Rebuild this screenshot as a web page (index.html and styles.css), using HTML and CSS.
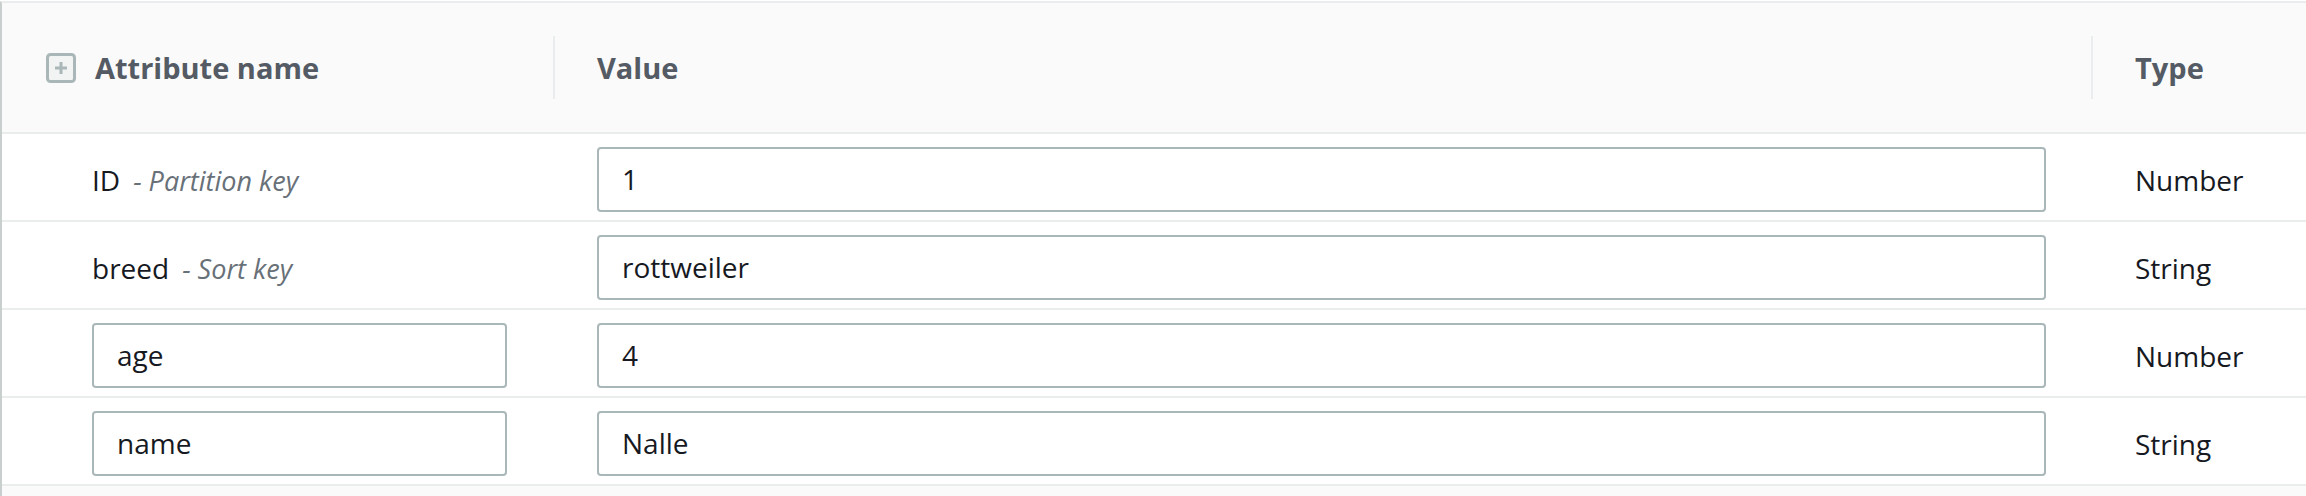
FILE: index.html
```html
<!DOCTYPE html>
<html lang="en">
<head>
<meta charset="utf-8">
<title>Attributes</title>
<link rel="stylesheet" href="styles.css">
</head>
<body>
<div class="table">
  <div class="row head">
    <div class="cell c1">
      <span class="expand" aria-hidden="true">
        <svg width="30" height="30" viewBox="0 0 30 30">
          <rect x="1.5" y="1.5" width="27" height="27" rx="3" fill="#f2f3f3" stroke="#aab7b8" stroke-width="3"/>
          <rect x="13.5" y="9" width="3" height="12" fill="#aab7b8"/>
          <rect x="9" y="13.5" width="12" height="3" fill="#aab7b8"/>
        </svg>
      </span>
      <span class="th">Attribute name</span>
    </div>
    <div class="cell c2 divided"><span class="th">Value</span></div>
    <div class="cell c3 divided"><span class="th">Type</span></div>
  </div>

  <div class="row">
    <div class="cell c1 named"><span class="name">ID</span><span class="key">- Partition key</span></div>
    <div class="cell c2"><input class="field" type="text" value="1"></div>
    <div class="cell c3"><span class="type">Number</span></div>
  </div>

  <div class="row">
    <div class="cell c1 named"><span class="name">breed</span><span class="key">- Sort key</span></div>
    <div class="cell c2"><input class="field" type="text" value="rottweiler"></div>
    <div class="cell c3"><span class="type">String</span></div>
  </div>

  <div class="row">
    <div class="cell c1 named"><input class="field attr" type="text" value="age"></div>
    <div class="cell c2"><input class="field" type="text" value="4"></div>
    <div class="cell c3"><span class="type">Number</span></div>
  </div>

  <div class="row">
    <div class="cell c1 named"><input class="field attr" type="text" value="name"></div>
    <div class="cell c2"><input class="field" type="text" value="Nalle"></div>
    <div class="cell c3"><span class="type">String</span></div>
  </div>
  <div class="foot"></div>
</div>
</body>
</html>
```

FILE: styles.css
```css
html, body {
  margin: 0;
  padding: 0;
  background: #ffffff;
}

body {
  font-family: "Open Sans", "Noto Sans", Arial, sans-serif;
  color: #16191f;
  padding-top: 1px;
}

.table {
  border-left: 2px solid #c9cfcf;
  border-top: 2px solid #eaeded;
  display: flex;
  flex-direction: column;
  height: 495px;
  box-sizing: border-box;
}

.row {
  display: grid;
  grid-template-columns: 551px 1538px 1fr;
  height: 88px;
  border-bottom: 2px solid #eaeded;
  box-sizing: border-box;
  align-items: center;
}

.row.head {
  height: 131px;
  background: #fafafa;
}

.cell {
  display: flex;
  align-items: center;
  height: 100%;
  box-sizing: border-box;
  min-width: 0;
}

.c1 {
  padding-left: 44px;
  padding-right: 46px;
}

.c1.named {
  padding-left: 90px;
}

.c2 {
  padding-left: 44px;
  padding-right: 45px;
}

.c3 {
  padding-left: 44px;
}

.divided {
  position: relative;
}

.divided::before {
  content: "";
  position: absolute;
  left: 0;
  top: 33px;
  height: 63px;
  width: 2px;
  background: #eaeded;
}

.expand {
  display: flex;
  width: 30px;
  height: 30px;
  margin-right: 19px;
}

.th {
  font-weight: 700;
  font-size: 29px;
  color: #545b64;
  line-height: 1;
}

.name {
  font-size: 28px;
  line-height: 1;
  padding-top: 6px;
}

.key {
  font-size: 27px;
  font-style: italic;
  color: #687078;
  margin-left: 13px;
  line-height: 1;
  padding-top: 6px;
}

.type {
  font-size: 28px;
  line-height: 1;
  padding-top: 6px;
}

.field {
  display: block;
  width: 100%;
  height: 65px;
  box-sizing: border-box;
  margin: 4px 0 0 0;
  border: 2px solid #aab7b8;
  border-radius: 4px;
  background: #ffffff;
  padding: 0 23px;
  font-family: "Open Sans", "Noto Sans", Arial, sans-serif;
  font-size: 28px;
  color: #16191f;
  outline: none;
}

.foot {
  flex: 1;
  background: #fafafa;
}
```
